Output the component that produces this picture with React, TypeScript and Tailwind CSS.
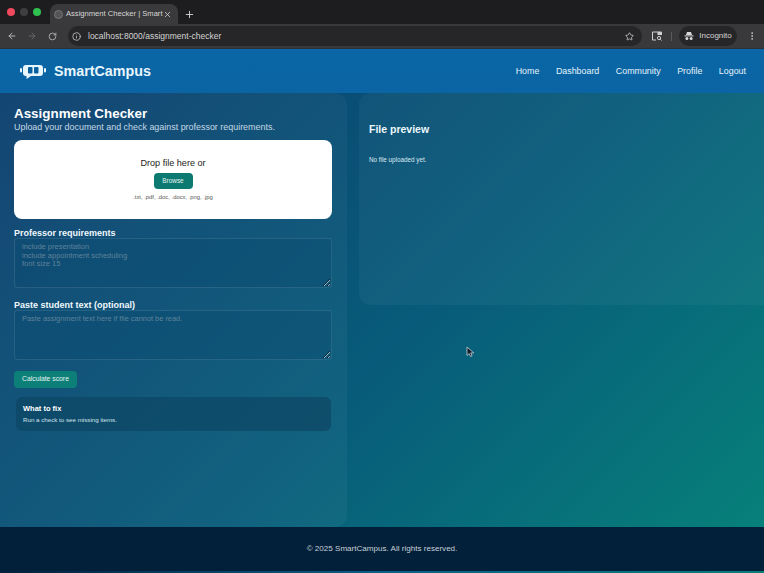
import { ArrowLeft, ArrowRight, EllipsisVertical, Info, Plus, RotateCw, Star, X } from "lucide-react";

const navLinks = ["Home", "Dashboard", "Community", "Profile", "Logout"];

const LogoIcon = () => (
  <svg width="26" height="16" viewBox="0 0 26 16" fill="none">
    <path d="M6 1h14a3 3 0 0 1 3 3v5a3 3 0 0 1-3 3H11l-4.5 3v-3H6a3 3 0 0 1-3-3V4a3 3 0 0 1 3-3z" fill="#e8f6fd" />
    <rect x="8" y="3" width="4.5" height="6.5" rx="1" fill="#0b609f" />
    <rect x="14" y="3" width="4.5" height="6.5" rx="1" fill="#0b609f" />
    <rect x="0" y="4" width="2" height="4.5" rx="1" fill="#e8f6fd" />
    <rect x="24" y="4" width="2" height="4.5" rx="1" fill="#e8f6fd" />
  </svg>
);

const IncognitoIcon = () => (
  <svg width="10" height="10" viewBox="0 0 10 10" fill="#d8d8d8">
    <path d="M3 1h4l1 3H2z" />
    <rect x="0.5" y="4.4" width="9" height="1" />
    <circle cx="2.9" cy="7.6" r="1.5" />
    <circle cx="7.1" cy="7.6" r="1.5" />
  </svg>
);

const SidePanelIcon = () => (
  <svg width="12" height="12" viewBox="0 0 12 12" fill="none" stroke="#cfcfcf" strokeWidth="1">
    <path d="M5 10H1.5V2h9v3" />
    <rect x="6.5" y="2" width="4" height="3" fill="#cfcfcf" stroke="none" />
    <circle cx="8" cy="8" r="1.6" />
    <path d="M9.2 9.2l1.3 1.3" />
  </svg>
);

const Cursor = () => (
  <svg width="9" height="12" viewBox="0 0 9 12" className="absolute left-[466px] top-[346px]">
    <path d="M1 1v8.5l2.2-2 1.4 3 1.5-.7-1.4-2.9h3z" fill="#111827" stroke="#c9d6da" strokeWidth="0.8" />
  </svg>
);

export default function App() {
  return (
    <div className="relative flex h-[573px] w-[764px] flex-col overflow-hidden bg-[#02203a] font-['Liberation_Sans',Arial,sans-serif] text-white">
      {/* browser tab strip */}
      <div className="flex h-6 items-end bg-[#1d1d1f]">
        <div className="flex h-6 w-[50px] items-center gap-[5px] pl-[7px]">
          <span className="h-[8px] w-[8px] rounded-full bg-[#f0485c]" />
          <span className="h-[8px] w-[8px] rounded-full bg-[#3f3f41]" />
          <span className="h-[8px] w-[8px] rounded-full bg-[#2fc24f]" />
        </div>
        <div className="flex h-[20px] w-[128px] items-center rounded-t-lg bg-[#3a3a3c] pl-[4px] pr-[6px]">
          <span className="h-[9px] w-[9px] rounded-full border border-[#77777a] bg-[#555558]" />
          <span className="ml-[3px] whitespace-nowrap text-[7.6px] text-[#d6d6d6]">Assignment Checker | Smart</span>
          <X size={9} className="ml-auto text-[#dddddd]" />
        </div>
        <div className="flex h-[20px] w-[22px] items-center justify-center">
          <Plus size={11} className="text-[#d5d5d5]" />
        </div>
      </div>

      {/* browser toolbar */}
      <div className="flex h-[25px] items-center border-b border-[#2c3138] bg-[#39393b] pl-[7px] pr-[7px]">
        <ArrowLeft size={10} className="text-[#c9c9c9]" />
        <ArrowRight size={10} className="ml-[10px] text-[#6f6f71]" />
        <RotateCw size={9} className="ml-[11px] text-[#c9c9c9]" />
        <div className="ml-[11px] flex h-[20px] w-[574px] items-center rounded-full bg-[#262628] pl-[4px] pr-[8px]">
          <Info size={9} className="text-[#d0d0d0]" />
          <span className="ml-[7px] text-[8.5px] text-[#d4d4d4]">localhost:8000/assignment-checker</span>
          <Star size={9} className="ml-auto text-[#d5d5d5]" />
        </div>
        <div className="ml-[9px]">
          <SidePanelIcon />
        </div>
        <span className="ml-[8px] h-[9px] w-px bg-[#5a5a5c]" />
        <div className="ml-[7px] flex h-[20px] w-[58px] items-center justify-center gap-[5px] rounded-full bg-[#262628]">
          <IncognitoIcon />
          <span className="text-[8px] text-[#d4d4d4]">Incognito</span>
        </div>
        <EllipsisVertical size={10} className="ml-auto text-[#cfcfcf]" />
      </div>

      {/* site header */}
      <header className="flex h-[44px] items-center justify-between bg-[linear-gradient(180deg,#0a66a6,#0b64a3)] pl-[20px] pr-[18px] pt-[1px]">
        <div className="flex items-center gap-[8px]">
          <LogoIcon />
          <span className="text-[14.3px] font-bold text-[#e8f6fd]">SmartCampus</span>
        </div>
        <nav className="flex gap-[16.5px] text-[8.9px] text-[#e6f4fc]">
          {navLinks.map((link) => (
            <a key={link}>{link}</a>
          ))}
        </nav>
      </header>

      {/* page */}
      <main className="flex h-[434px] items-start gap-[12px] bg-[linear-gradient(135deg,#0b3e6e_0%,#085c7a_55%,#07807a_100%)]">
        <section className="h-full w-[347px] rounded-r-xl bg-white/[0.04] px-[14px] pt-[13px]">
          <h1 className="text-[13.4px] font-bold leading-[15px]">Assignment Checker</h1>
          <p className="text-[8.93px] leading-[12px] text-[#c4d8e4]">Upload your document and check against professor requirements.</p>

          <div className="mt-[7px] flex h-[79px] w-[318px] flex-col items-center rounded-lg bg-white pt-[17px]">
            <p className="text-[9.1px] leading-[12px] text-[#1b1b1b]">Drop file here or</p>
            <button className="mt-[4px] h-[16px] w-[39px] rounded-[4px] bg-[#0d7a72] text-[6.4px] text-[#e6f5f3]">Browse</button>
            <p className="mt-[4px] text-[5.85px] leading-[8px] text-[#555]">.txt, .pdf, .doc, .docx, .png, .jpg</p>
          </div>

          <label className="mt-[8px] block text-[9px] font-bold leading-[12px] text-[#f0f8fc]">Professor requirements</label>
          <textarea
            className="mt-[-1px] block h-[50px] w-[318px] rounded-[3px] border border-white/10 bg-[#0b4a70]/40 px-[7px] py-[4px] text-[7.5px] leading-[8.7px] outline-none placeholder:text-[#5f8298]"
            placeholder={"include presentation\ninclude appointment scheduling\nfont size 15"}
          />

          <label className="mt-[11px] block text-[9px] font-bold leading-[12px] text-[#f0f8fc]">Paste student text (optional)</label>
          <textarea
            className="mt-[-1px] block h-[50px] w-[318px] rounded-[3px] border border-white/10 bg-[#0b4a70]/40 px-[7px] py-[4px] text-[7.4px] leading-[8.7px] outline-none placeholder:text-[#5f8298]"
            placeholder="Paste assignment text here if file cannot be read."
          />

          <button className="mt-[11px] block h-[17px] w-[63px] rounded-[4px] bg-[#0c8078] text-[6.8px] text-[#e6f5f3]">Calculate score</button>

          <div className="ml-[2px] mt-[9px] h-[34px] w-[315px] rounded-md bg-[#0d4664]/70 px-[7px] pt-[7px]">
            <h3 className="text-[7.5px] font-bold leading-[10px]">What to fix</h3>
            <p className="mt-[1px] text-[6.2px] leading-[9px] text-[#d4e4ec]">Run a check to see missing items.</p>
          </div>
        </section>

        <section className="h-[212px] flex-1 rounded-l-xl bg-white/[0.04] pl-[10px] pt-[30px]">
          <h2 className="text-[10.5px] font-bold leading-[12px] text-[#eef8fc]">File preview</h2>
          <p className="mt-[20px] text-[6.3px] leading-[9px] text-[#dbe9f0]">No file uploaded yet.</p>
        </section>
      </main>

      <footer className="flex h-[44px] items-center justify-center bg-[#02203a] text-[8.07px] text-[#c6d0d8]">
        © 2025 SmartCampus. All rights reserved.
      </footer>
      <div className="h-[2px] bg-[linear-gradient(90deg,#02203a,#0b5f86,#0a7d78)]" />
      <Cursor />
    </div>
  );
}
